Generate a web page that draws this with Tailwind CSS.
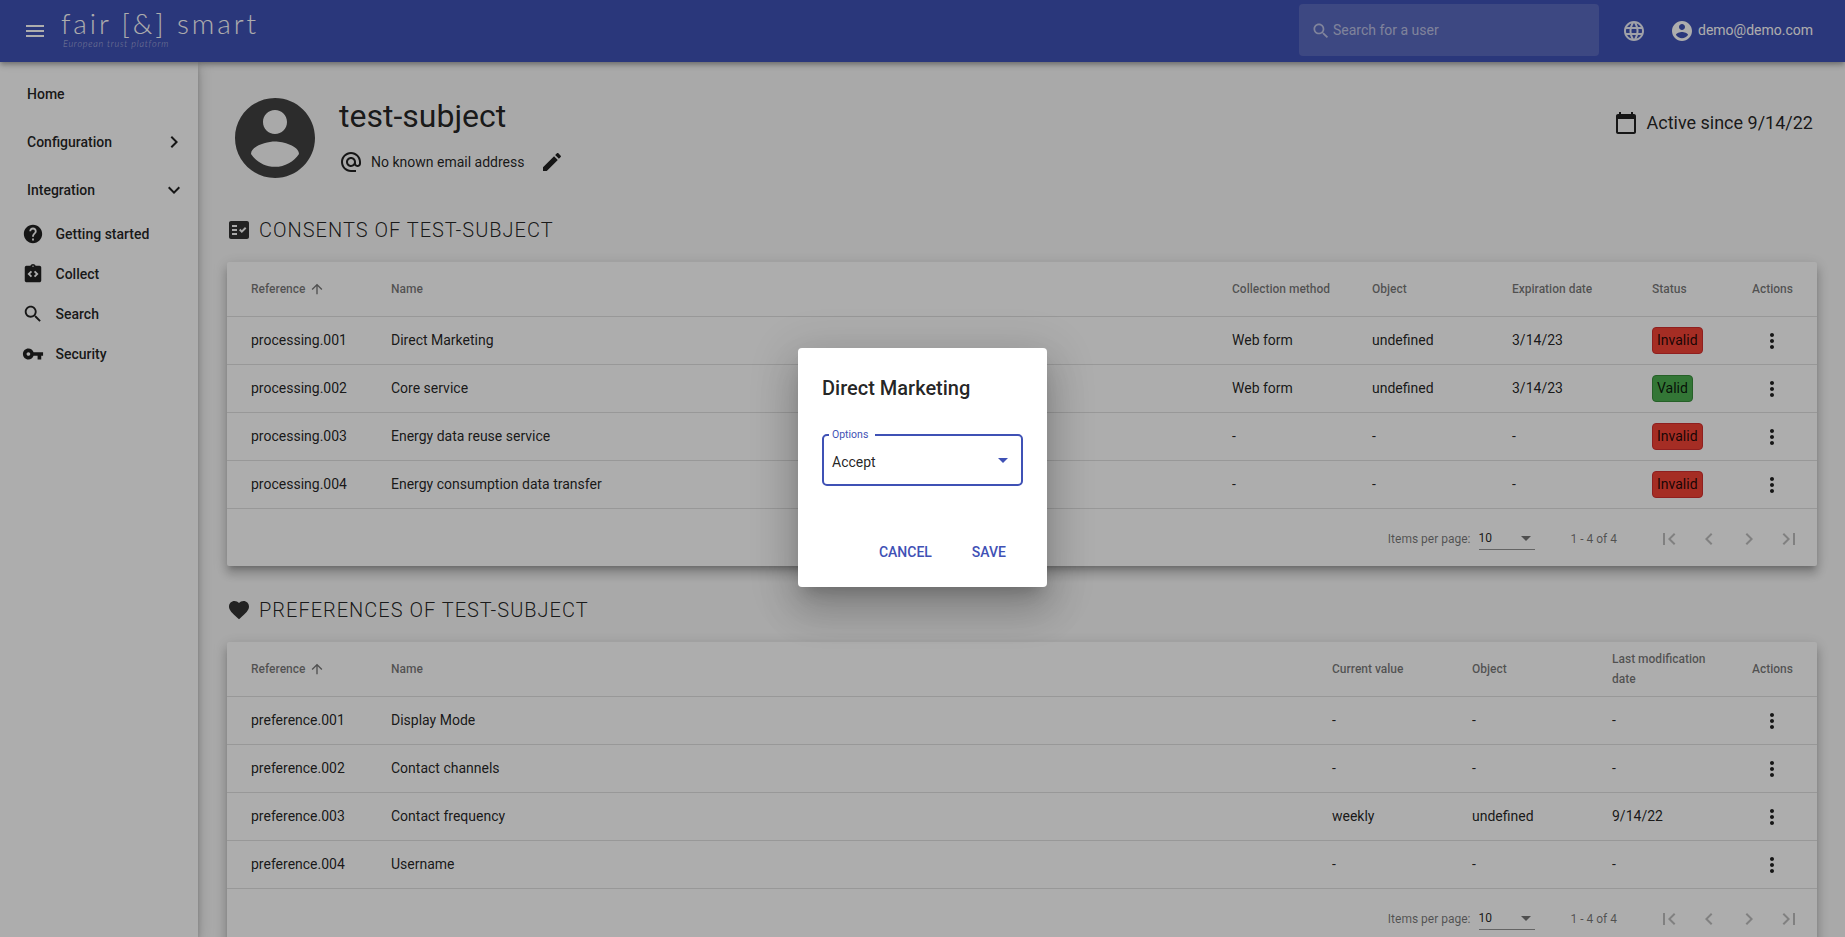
<!DOCTYPE html>
<html lang="en">
<head>
<meta charset="utf-8">
<title>fair [&amp;] smart</title>
<script src="https://cdn.jsdelivr.net/npm/@tailwindcss/browser@4"></script>
</head>
<body class="relative h-[937px] overflow-hidden bg-[#fafafa] [font-family:Roboto,sans-serif] text-[14px] text-black/87">
<svg class="hidden" xmlns="http://www.w3.org/2000/svg">
<symbol id="i-menu" viewBox="0 0 24 24"><path d="M3 18h18v-2H3v2zm0-5h18v-2H3v2zm0-7v2h18V6H3z"/></symbol>
<symbol id="i-search" viewBox="0 0 24 24"><path d="M15.5 14h-.79l-.28-.27C15.41 12.59 16 11.11 16 9.5 16 5.91 13.09 3 9.5 3S3 5.91 3 9.5 5.91 16 9.5 16c1.61 0 3.09-.59 4.23-1.57l.27.28v.79l5 4.99L20.49 19l-4.99-5zm-6 0C7.01 14 5 11.99 5 9.5S7.01 5 9.5 5 14 7.01 14 9.5 11.99 14 9.5 14z"/></symbol>
<symbol id="i-lang" viewBox="0 0 24 24"><path d="M11.99 2C6.47 2 2 6.48 2 12s4.47 10 9.99 10C17.52 22 22 17.52 22 12S17.52 2 11.99 2zm6.93 6h-2.95c-.32-1.25-.78-2.45-1.38-3.56 1.84.63 3.37 1.91 4.33 3.56zM12 4.04c.83 1.2 1.48 2.53 1.91 3.96h-3.82c.43-1.43 1.08-2.76 1.91-3.96zM4.26 14C4.1 13.36 4 12.69 4 12s.1-1.36.26-2h3.38c-.08.66-.14 1.32-.14 2 0 .68.06 1.34.14 2H4.26zm.82 2h2.95c.32 1.25.78 2.45 1.38 3.56-1.84-.63-3.37-1.9-4.33-3.56zm2.95-8H5.08c.96-1.66 2.49-2.93 4.33-3.56C8.81 5.55 8.35 6.75 8.03 8zM12 19.96c-.83-1.2-1.48-2.53-1.91-3.96h3.82c-.43 1.43-1.08 2.76-1.91 3.96zM14.34 14H9.66c-.09-.66-.16-1.32-.16-2 0-.68.07-1.35.16-2h4.68c.09.65.16 1.32.16 2 0 .68-.07 1.34-.16 2zm.25 5.56c.6-1.11 1.06-2.31 1.38-3.56h2.95c-.96 1.65-2.49 2.93-4.33 3.56zM16.36 14c.08-.66.14-1.32.14-2 0-.68-.06-1.34-.14-2h3.38c.16.64.26 1.31.26 2s-.1 1.36-.26 2h-3.38z"/></symbol>
<symbol id="i-account" viewBox="0 0 24 24"><path d="M12 2C6.48 2 2 6.48 2 12s4.48 10 10 10 10-4.48 10-10S17.52 2 12 2zm0 3c1.66 0 3 1.34 3 3s-1.34 3-3 3-3-1.34-3-3 1.34-3 3-3zm0 14.2c-2.5 0-4.71-1.28-6-3.22.03-1.99 4-3.08 6-3.08 1.99 0 5.97 1.09 6 3.08-1.29 1.94-3.5 3.22-6 3.22z"/></symbol>
<symbol id="i-at" viewBox="0 0 24 24"><path d="M12 2C6.48 2 2 6.48 2 12s4.48 10 10 10h5v-2h-5c-4.34 0-8-3.66-8-8s3.66-8 8-8 8 3.66 8 8v1.43c0 .79-.71 1.57-1.5 1.57s-1.5-.78-1.5-1.57V12c0-2.76-2.24-5-5-5s-5 2.24-5 5 2.24 5 5 5c1.38 0 2.64-.56 3.54-1.47.65.89 1.77 1.47 2.96 1.47 1.97 0 3.5-1.6 3.5-3.57V12c0-5.52-4.48-10-10-10zm0 13c-1.66 0-3-1.34-3-3s1.34-3 3-3 3 1.34 3 3-1.34 3-3 3z"/></symbol>
<symbol id="i-edit" viewBox="0 0 24 24"><path d="M3 17.25V21h3.75L17.81 9.94l-3.75-3.75L3 17.25zM20.71 7.04c.39-.39.39-1.02 0-1.41l-2.34-2.34c-.39-.39-1.02-.39-1.41 0l-1.83 1.83 3.75 3.75 1.83-1.83z"/></symbol>
<symbol id="i-cal" viewBox="0 0 24 24"><path d="M20 3h-1V1h-2v2H7V1H5v2H4c-1.1 0-2 .9-2 2v16c0 1.1.9 2 2 2h16c1.1 0 2-.9 2-2V5c0-1.1-.9-2-2-2zm0 18H4V8h16v13z"/></symbol>
<symbol id="i-fact" viewBox="0 0 24 24"><path fill-rule="evenodd" d="M20 3H4c-1.1 0-2 .9-2 2v14c0 1.1.9 2 2 2h16c1.1 0 2-.9 2-2V5c0-1.1-.9-2-2-2zM10 17H5v-2h5v2zm0-4H5v-2h5v2zm0-4H5V7h5v2zm4.82 6L12 12.16l1.41-1.41 1.41 1.42L17.99 9l1.42 1.42L14.82 15z"/></symbol>
<symbol id="i-heart" viewBox="0 0 24 24"><path d="M12 21.35l-1.45-1.32C5.4 15.36 2 12.28 2 8.5 2 5.42 4.42 3 7.5 3c1.74 0 3.41.81 4.5 2.09C13.09 3.81 14.76 3 16.5 3 19.58 3 22 5.42 22 8.5c0 3.78-3.4 6.86-8.55 11.54L12 21.35z"/></symbol>
<symbol id="i-help" viewBox="0 0 24 24"><path d="M12 2C6.48 2 2 6.48 2 12s4.48 10 10 10 10-4.48 10-10S17.52 2 12 2zm1 17h-2v-2h2v2zm2.07-7.75l-.9.92C13.45 12.9 13 13.5 13 15h-2v-.5c0-1.1.45-2.1 1.17-2.83l1.24-1.26c.37-.36.59-.86.59-1.41 0-1.1-.9-2-2-2s-2 .9-2 2H8c0-2.21 1.79-4 4-4s4 1.79 4 4c0 .88-.36 1.68-.93 2.25z"/></symbol>
<symbol id="i-code" viewBox="0 0 24 24"><path d="M19 3h-4.18C14.4 1.84 13.3 1 12 1c-1.3 0-2.4.84-2.82 2H5c-.14 0-.27.01-.4.04-.39.08-.74.28-1.01.55-.18.18-.33.4-.43.64-.1.23-.16.49-.16.77v14c0 .27.06.54.16.78s.25.45.43.64c.27.27.62.47 1.01.55.13.02.26.03.4.03h14c1.1 0 2-.9 2-2V5c0-1.1-.9-2-2-2zM11 14.17l-1.41 1.42L6 12l3.59-3.59L11 9.83 8.83 12 11 14.17zm1-9.92c-.41 0-.75-.34-.75-.75s.34-.75.75-.75.75.34.75.75-.34.75-.75.75zm2.41 11.34L13 14.17 15.17 12 13 9.83l1.41-1.42L18 12l-3.59 3.59z"/></symbol>
<symbol id="i-key" viewBox="0 0 24 24"><path d="M12.65 10C11.83 7.67 9.61 6 7 6c-3.31 0-6 2.69-6 6s2.69 6 6 6c2.61 0 4.83-1.67 5.65-4H17v4h4v-4h2v-4H12.65zM7 14c-1.1 0-2-.9-2-2s.9-2 2-2 2 .9 2 2-.9 2-2 2z"/></symbol>
<symbol id="i-more" viewBox="0 0 24 24"><path d="M12 8c1.1 0 2-.9 2-2s-.9-2-2-2-2 .9-2 2 .9 2 2 2zm0 2c-1.1 0-2 .9-2 2s.9 2 2 2 2-.9 2-2-.9-2-2-2zm0 6c-1.1 0-2 .9-2 2s.9 2 2 2 2-.9 2-2-.9-2-2-2z"/></symbol>
<symbol id="i-up" viewBox="0 0 24 24"><path d="M4 12l1.41 1.41L11 7.83V20h2V7.83l5.58 5.59L20 12l-8-8-8 8z"/></symbol>
<symbol id="i-right" viewBox="0 0 24 24"><path d="M10 6L8.59 7.41 13.17 12l-4.58 4.59L10 18l6-6z"/></symbol>
<symbol id="i-left" viewBox="0 0 24 24"><path d="M15.41 7.41L14 6l-6 6 6 6 1.41-1.41L10.83 12z"/></symbol>
<symbol id="i-down" viewBox="0 0 24 24"><path d="M16.59 8.59L12 13.17 7.41 8.59 6 10l6 6 6-6z"/></symbol>
<symbol id="i-first" viewBox="0 0 24 24"><path d="M18.41 16.59L13.82 12l4.59-4.59L17 6l-6 6 6 6zM6 6h2v12H6z"/></symbol>
<symbol id="i-last" viewBox="0 0 24 24"><path d="M5.59 7.41L10.18 12l-4.59 4.59L7 18l6-6-6-6zM16 6h2v12h-2z"/></symbol>
</svg>

<header class="relative z-20 flex h-[62px] items-center bg-[#3f51b5] text-white shadow-[0_2px_4px_-1px_rgba(0,0,0,.2),0_4px_5px_0_rgba(0,0,0,.14),0_1px_10px_0_rgba(0,0,0,.12)]">
  <svg class="ml-[23px] size-6 fill-current"><use href="#i-menu"/></svg>
  <div class="mb-[4px] ml-[14px] flex flex-col">
    <span class="[font-family:Lato,sans-serif] text-[28px] leading-[30px] font-light tracking-[2.9px] whitespace-nowrap">fair [&amp;] smart</span>
    <span class="ml-[2px] [font-family:Lato,sans-serif] text-[9px] leading-[12px] font-light tracking-[.8px] whitespace-nowrap text-white/60 italic">European trust platform</span>
  </div>
  <div class="mb-[2px] ml-auto flex h-[52px] w-[300px] items-center rounded bg-white/15 pl-[12px] text-white/60">
    <svg class="mt-[2px] size-[20px] fill-current"><use href="#i-search"/></svg>
    <span class="ml-[2px]">Search for a user</span>
  </div>
  <svg class="ml-[23px] size-6 fill-current text-white/90"><use href="#i-lang"/></svg>
  <svg class="ml-[24px] size-6 fill-current"><use href="#i-account"/></svg>
  <span class="mr-[32px] mb-[1px] ml-[4px] text-[14px] font-normal">demo@demo.com</span>
</header>

<div class="flex h-[875px]">
  <aside class="relative z-10 w-[198px] shrink-0 bg-white pt-[8px] font-medium shadow-[0_3px_5px_-1px_rgba(0,0,0,.2),0_6px_10px_0_rgba(0,0,0,.14),0_1px_18px_0_rgba(0,0,0,.12)]">
    <div class="flex h-[48px] items-center pl-[27px]">Home</div>
    <div class="flex h-[48px] items-center justify-between pr-[12px] pl-[27px]">Configuration<svg class="size-6 fill-current"><use href="#i-right"/></svg></div>
    <div class="flex h-[48px] items-center justify-between pr-[12px] pl-[27px]">Integration<svg class="size-6 fill-current"><use href="#i-down"/></svg></div>
    <div class="flex h-[40px] items-center gap-[11.5px] pl-[22px]"><svg class="size-[22px] fill-current"><use href="#i-help"/></svg>Getting started</div>
    <div class="flex h-[40px] items-center gap-[11.5px] pl-[22px]"><svg class="size-[22px] fill-current"><use href="#i-code"/></svg>Collect</div>
    <div class="flex h-[40px] items-center gap-[11.5px] pl-[22px]"><svg class="size-[22px] fill-current"><use href="#i-search"/></svg>Search</div>
    <div class="flex h-[40px] items-center gap-[11.5px] pl-[22px]"><svg class="size-[22px] fill-current"><use href="#i-key"/></svg>Security</div>
  </aside>

  <main class="min-w-0 flex-1 pt-[28px] pr-[28px] pl-[29px]">
    <section class="flex h-[96px] items-start">
      <svg class="size-[96px] shrink-0 fill-[#424242]"><use href="#i-account"/></svg>
      <div class="ml-[16px]">
        <h1 class="mt-[8px] text-[32px] leading-[36px] font-normal">test-subject</h1>
        <div class="mt-[16px] flex h-[24px] items-center">
          <svg class="size-6 fill-current"><use href="#i-at"/></svg>
          <span class="ml-[8px]">No known email address</span>
          <svg class="ml-[16px] size-6 fill-current"><use href="#i-edit"/></svg>
        </div>
      </div>
      <div class="mt-[19px] mr-[4px] ml-auto flex items-center text-[18px]">
        <svg class="size-6 fill-current"><use href="#i-cal"/></svg>
        <span class="ml-[8px]">Active since 9/14/22</span>
      </div>
    </section>

    <h2 class="mt-[32px] flex h-[24px] items-center text-[20px] font-light tracking-[1px] uppercase"><svg class="mr-[8px] size-6 fill-[#333]"><use href="#i-fact"/></svg>Consents of test-subject</h2>

    <section class="mt-[20px] h-[304px] rounded-[2px] bg-white shadow-[0_5px_5px_-3px_rgba(0,0,0,.2),0_8px_10px_1px_rgba(0,0,0,.14),0_3px_14px_2px_rgba(0,0,0,.12)]">
      <div class="grid h-[55px] grid-cols-[140px_841px_140px_140px_140px_100px_41px] items-center border-b border-black/12 px-[24px] text-[12px] font-medium text-black/54">
        <div class="flex items-center">Reference<svg class="ml-[4px] size-[16px] fill-current"><use href="#i-up"/></svg></div><div>Name</div><div>Collection method</div><div>Object</div><div>Expiration date</div><div>Status</div><div>Actions</div>
      </div>
      <div class="grid h-[48px] grid-cols-[140px_841px_140px_140px_140px_100px_41px] items-center border-b border-black/12 px-[24px]">
        <div>processing.001</div><div>Direct Marketing</div><div>Web form</div><div>undefined</div><div>3/14/23</div><div><span class="inline-block rounded-[4px] border border-[#d32f2f] bg-[#f44336] px-[4px] py-[4px] leading-[17px]">Invalid</span></div><svg class="ml-[8px] size-6 fill-current"><use href="#i-more"/></svg>
      </div>
      <div class="grid h-[48px] grid-cols-[140px_841px_140px_140px_140px_100px_41px] items-center border-b border-black/12 px-[24px]">
        <div>processing.002</div><div>Core service</div><div>Web form</div><div>undefined</div><div>3/14/23</div><div><span class="inline-block rounded-[4px] border border-[#388e3c] bg-[#4caf50] px-[4px] py-[4px] leading-[17px]">Valid</span></div><svg class="ml-[8px] size-6 fill-current"><use href="#i-more"/></svg>
      </div>
      <div class="grid h-[48px] grid-cols-[140px_841px_140px_140px_140px_100px_41px] items-center border-b border-black/12 px-[24px]">
        <div>processing.003</div><div>Energy data reuse service</div><div>-</div><div>-</div><div>-</div><div><span class="inline-block rounded-[4px] border border-[#d32f2f] bg-[#f44336] px-[4px] py-[4px] leading-[17px]">Invalid</span></div><svg class="ml-[8px] size-6 fill-current"><use href="#i-more"/></svg>
      </div>
      <div class="grid h-[48px] grid-cols-[140px_841px_140px_140px_140px_100px_41px] items-center border-b border-black/12 px-[24px]">
        <div>processing.004</div><div>Energy consumption data transfer</div><div>-</div><div>-</div><div>-</div><div><span class="inline-block rounded-[4px] border border-[#d32f2f] bg-[#f44336] px-[4px] py-[4px] leading-[17px]">Invalid</span></div><svg class="ml-[8px] size-6 fill-current"><use href="#i-more"/></svg>
      </div>
      <div class="flex h-[56px] items-center justify-end pt-[3px] pr-[8px] text-[12px] text-black/54">
        <span>Items per page:</span>
        <div class="ml-[8px] flex h-[23px] w-[56px] items-center justify-between border-b border-black/42 pr-[4px] text-black/87"><span>10</span><span class="border-x-[5px] border-t-[5px] border-x-transparent border-t-black/54"></span></div>
        <span class="mr-[32px] ml-[36px]">1 - 4 of 4</span>
        <svg class="mx-[8px] size-6 fill-black/26"><use href="#i-first"/></svg><svg class="mx-[8px] size-6 fill-black/26"><use href="#i-left"/></svg><svg class="mx-[8px] size-6 fill-black/26"><use href="#i-right"/></svg><svg class="mx-[8px] size-6 fill-black/26"><use href="#i-last"/></svg>
      </div>
    </section>

    <h2 class="mt-[32px] flex h-[24px] items-center text-[20px] font-light tracking-[1px] uppercase"><svg class="mr-[8px] size-6 fill-[#333]"><use href="#i-heart"/></svg>Preferences of test-subject</h2>

    <section class="mt-[20px] h-[304px] rounded-[2px] bg-white shadow-[0_5px_5px_-3px_rgba(0,0,0,.2),0_8px_10px_1px_rgba(0,0,0,.14),0_3px_14px_2px_rgba(0,0,0,.12)]">
      <div class="grid h-[55px] grid-cols-[140px_941px_140px_140px_140px_41px] items-center border-b border-black/12 px-[24px] text-[12px] leading-[20px] font-medium text-black/54">
        <div class="flex items-center">Reference<svg class="ml-[4px] size-[16px] fill-current"><use href="#i-up"/></svg></div><div>Name</div><div>Current value</div><div>Object</div><div class="w-[110px]">Last modification date</div><div>Actions</div>
      </div>
      <div class="grid h-[48px] grid-cols-[140px_941px_140px_140px_140px_41px] items-center border-b border-black/12 px-[24px]">
        <div>preference.001</div><div>Display Mode</div><div>-</div><div>-</div><div>-</div><svg class="ml-[8px] size-6 fill-current"><use href="#i-more"/></svg>
      </div>
      <div class="grid h-[48px] grid-cols-[140px_941px_140px_140px_140px_41px] items-center border-b border-black/12 px-[24px]">
        <div>preference.002</div><div>Contact channels</div><div>-</div><div>-</div><div>-</div><svg class="ml-[8px] size-6 fill-current"><use href="#i-more"/></svg>
      </div>
      <div class="grid h-[48px] grid-cols-[140px_941px_140px_140px_140px_41px] items-center border-b border-black/12 px-[24px]">
        <div>preference.003</div><div>Contact frequency</div><div>weekly</div><div>undefined</div><div>9/14/22</div><svg class="ml-[8px] size-6 fill-current"><use href="#i-more"/></svg>
      </div>
      <div class="grid h-[48px] grid-cols-[140px_941px_140px_140px_140px_41px] items-center border-b border-black/12 px-[24px]">
        <div>preference.004</div><div>Username</div><div>-</div><div>-</div><div>-</div><svg class="ml-[8px] size-6 fill-current"><use href="#i-more"/></svg>
      </div>
      <div class="flex h-[56px] items-center justify-end pt-[3px] pr-[8px] text-[12px] text-black/54">
        <span>Items per page:</span>
        <div class="ml-[8px] flex h-[23px] w-[56px] items-center justify-between border-b border-black/42 pr-[4px] text-black/87"><span>10</span><span class="border-x-[5px] border-t-[5px] border-x-transparent border-t-black/54"></span></div>
        <span class="mr-[32px] ml-[36px]">1 - 4 of 4</span>
        <svg class="mx-[8px] size-6 fill-black/26"><use href="#i-first"/></svg><svg class="mx-[8px] size-6 fill-black/26"><use href="#i-left"/></svg><svg class="mx-[8px] size-6 fill-black/26"><use href="#i-right"/></svg><svg class="mx-[8px] size-6 fill-black/26"><use href="#i-last"/></svg>
      </div>
    </section>
  </main>
</div>

<div class="absolute inset-0 z-30 bg-black/32"></div>

<div role="dialog" class="absolute top-[348px] left-[798px] z-40 h-[239px] w-[249px] rounded bg-white p-[24px] shadow-[0_11px_15px_-7px_rgba(0,0,0,.2),0_24px_38px_3px_rgba(0,0,0,.14),0_9px_46px_8px_rgba(0,0,0,.12)]">
  <h3 class="text-[20px] leading-[32px] font-medium">Direct Marketing</h3>
  <div class="relative mt-[30px] flex h-[52px] w-[201px] items-center justify-between rounded-[5px] border-2 border-[#3f51b5] pt-[4px] pr-[13px] pl-[8px]">
    <span class="absolute top-[-8px] left-[5px] bg-white pr-[7px] pl-[3px] text-[10.5px] leading-[13px] text-[#3f51b5]">Options</span>
    <span>Accept</span>
    <span class="mb-[4px] border-x-[5px] border-t-[5px] border-x-transparent border-t-[#3f51b5]"></span>
  </div>
  <div class="mt-[48px] mr-[1px] flex justify-end gap-[8px] text-[14px] font-medium text-[#3f51b5]">
    <span class="px-[16px] leading-[36px]">CANCEL</span>
    <span class="px-[16px] leading-[36px]">SAVE</span>
  </div>
</div>
</body>
</html>
